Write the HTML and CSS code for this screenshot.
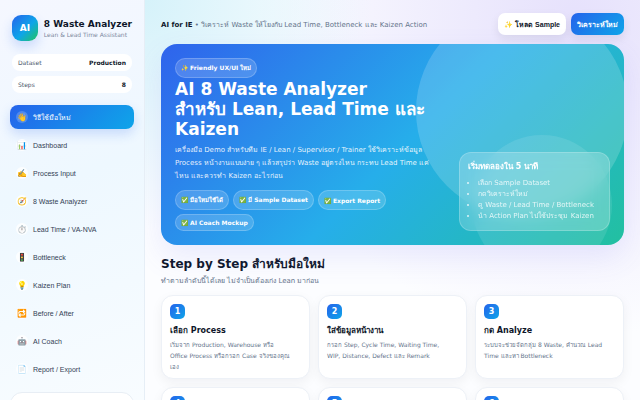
FILE: index.html
```html
<!DOCTYPE html>
<html lang="th">

<head>
    <meta charset="UTF-8">
    <meta name="viewport" content="width=device-width, initial-scale=1.0">
    <title>AI 8 Waste Analyzer</title>
    <link rel="stylesheet" href="styles.css">
</head>

<body>
    <div class="app">
        <aside class="sidebar">
            <div class="brand">
                <div class="brand-logo">AI</div>
                <div>
                    <div class="brand-name">8 Waste Analyzer</div>
                    <div class="brand-sub">Lean &amp; Lead Time Assistant</div>
                </div>
            </div>

            <div class="stats">
                <div class="stat"><span>Dataset</span><strong>Production</strong></div>
                <div class="stat"><span>Steps</span><strong>8</strong></div>
            </div>

            <nav class="nav">
                <button class="nav-item active"><span class="nav-icon">👋</span>วิธีใช้มือใหม่</button>
                <button class="nav-item"><span class="nav-icon">📊</span>Dashboard</button>
                <button class="nav-item"><span class="nav-icon">✍️</span>Process Input</button>
                <button class="nav-item"><span class="nav-icon">🧭</span>8 Waste Analyzer</button>
                <button class="nav-item"><span class="nav-icon">⏱️</span>Lead Time / VA-NVA</button>
                <button class="nav-item"><span class="nav-icon">🚦</span>Bottleneck</button>
                <button class="nav-item"><span class="nav-icon">💡</span>Kaizen Plan</button>
                <button class="nav-item"><span class="nav-icon">🔁</span>Before / After</button>
                <button class="nav-item"><span class="nav-icon">🤖</span>AI Coach</button>
                <button class="nav-item"><span class="nav-icon">📄</span>Report / Export</button>
            </nav>

            <div class="side-card"></div>
        </aside>

        <main class="main">
            <header class="topbar">
                <div class="crumb"><strong>AI for IE</strong> • วิเคราะห์ Waste ให้โยงกับ Lead Time, Bottleneck และ Kaizen Action</div>
                <div class="actions">
                    <button class="btn">✨ โหลด Sample</button>
                    <button class="btn primary">วิเคราะห์ใหม่</button>
                </div>
            </header>

            <section class="hero">
                <div class="hero-text">
                    <span class="chip">✨ Friendly UX/UI ใหม่</span>
                    <h1>AI 8 Waste Analyzer<br>สำหรับ Lean, Lead Time และ Kaizen</h1>
                    <p>เครื่องมือ Demo สำหรับทีม IE / Lean / Supervisor / Trainer ใช้วิเคราะห์ข้อมูล Process หน้างานแบบง่าย ๆ แล้วสรุปว่า Waste อยู่ตรงไหน กระทบ Lead Time แค่ไหน และควรทำ Kaizen อะไรก่อน</p>
                    <div class="chips">
                        <span class="chip">✅ มือใหม่ใช้ได้</span>
                        <span class="chip">✅ มี Sample Dataset</span>
                        <span class="chip">✅ Export Report</span>
                        <span class="chip">✅ AI Coach Mockup</span>
                    </div>
                </div>
                <div class="hero-card">
                    <h2>เริ่มทดลองใน 5 นาที</h2>
                    <ul>
                        <li>เลือก Sample Dataset</li>
                        <li>กดวิเคราะห์ใหม่</li>
                        <li>ดู Waste / Lead Time / Bottleneck</li>
                        <li>นำ Action Plan ไปใช้ประชุม Kaizen</li>
                    </ul>
                </div>
            </section>

            <section class="steps">
                <h2>Step by Step สำหรับมือใหม่</h2>
                <p class="steps-sub">ทำตามลำดับนี้ได้เลย ไม่จำเป็นต้องเก่ง Lean มาก่อน</p>
                <div class="grid">
                    <article class="card">
                        <div class="num">1</div>
                        <h3>เลือก Process</h3>
                        <p>เริ่มจาก Production, Warehouse หรือ Office Process หรือกรอก Case จริงของคุณเอง</p>
                    </article>
                    <article class="card">
                        <div class="num">2</div>
                        <h3>ใส่ข้อมูลหน้างาน</h3>
                        <p>กรอก Step, Cycle Time, Waiting Time, WIP, Distance, Defect และ Remark</p>
                    </article>
                    <article class="card">
                        <div class="num">3</div>
                        <h3>กด Analyze</h3>
                        <p>ระบบจะช่วยจัดกลุ่ม 8 Waste, คำนวณ Lead Time และหา Bottleneck</p>
                    </article>
                    <article class="card">
                        <div class="num">4</div>
                    </article>
                    <article class="card">
                        <div class="num">5</div>
                    </article>
                    <article class="card">
                        <div class="num">6</div>
                    </article>
                </div>
            </section>
        </main>
    </div>
</body>

</html>
```
FILE: styles.css
```css
* {
    box-sizing: border-box;
    margin: 0;
    padding: 0;
}

body {
    font-family: "DejaVu Sans", sans-serif;
    font-size: 7px;
    color: #0f172a;
    background:
        radial-gradient(circle at 22% 0%, #d5f2fa 0, transparent 36%),
        radial-gradient(circle at 90% 5%, #e6e1fc 0, transparent 46%),
        #fcfdff;
    height: 100vh;
    overflow: hidden;
}

.app {
    display: grid;
    grid-template-columns: 145px 1fr;
    height: 100vh;
}

/* sidebar */
.sidebar {
    padding: 14px 10px;
    background: linear-gradient(160deg, #f5f7ff 0%, #eef8ff 45%, #f8fcff 100%);
    border-right: 1px solid #e6eef6;
    overflow: hidden;
}

.brand {
    display: flex;
    align-items: center;
    gap: 6px;
    padding: 1px 2px 0;
}

.brand-logo {
    width: 26px;
    height: 26px;
    border-radius: 9px;
    display: grid;
    place-items: center;
    background: linear-gradient(135deg, #2563eb, #0ea5e9 55%, #22c55e);
    box-shadow: 0 6px 12px rgba(37, 99, 235, 0.2);
    color: #fff;
    font-size: 9px;
    font-weight: 700;
}

.brand-name {
    padding-top: 2px;
    font-size: 9px;
    line-height: 11px;
    font-weight: 700;
    white-space: nowrap;
}

.brand-sub {
    font-size: 6px;
    line-height: 9px;
    color: #7c89a0;
}

.stats {
    display: grid;
    gap: 5px;
    margin: 13px 2px 12px;
}

.stat {
    display: flex;
    justify-content: space-between;
    align-items: center;
    height: 17px;
    padding: 0 6px;
    border-radius: 8px;
    background: #fff;
    font-size: 6px;
    color: #475569;
}

.stat strong {
    color: #0f172a;
}

.nav {
    display: grid;
    gap: 4px;
}

.nav-item {
    display: flex;
    align-items: center;
    gap: 5px;
    height: 24px;
    padding: 0 6px;
    border: 0;
    border-radius: 8px;
    background: transparent;
    color: #334155;
    font-family: "Liberation Sans", sans-serif;
    font-size: 7px;
    text-align: left;
}

.nav-item.active {
    background: linear-gradient(135deg, #2563eb, #0ea5e9);
    box-shadow: 0 5px 12px rgba(37, 99, 235, 0.2);
    color: #fff;
}

.nav-icon {
    width: 12px;
    height: 12px;
    border-radius: 6px;
    display: grid;
    place-items: center;
    background: rgba(255, 255, 255, 0.8);
    font-size: 8px;
}

.active .nav-icon {
    background: rgba(255, 255, 255, 0.2);
}

.side-card {
    height: 60px;
    margin-top: 11px;
    border: 1px solid #e8eef5;
    border-radius: 12px;
    background: #fff;
}

/* main */
.main {
    padding: 13px 16px 0;
    overflow: hidden;
}

.topbar {
    display: flex;
    justify-content: space-between;
    align-items: center;
    margin-bottom: 9px;
}

.crumb {
    color: #64748b;
}

.crumb strong {
    color: #0f172a;
}

.actions {
    display: flex;
    gap: 5px;
}

.btn {
    height: 22px;
    padding: 0 6px;
    border: 0;
    border-radius: 7px;
    background: #fff;
    box-shadow: 0 4px 10px rgba(15, 23, 42, 0.08);
    color: #0f172a;
    font-family: "Liberation Sans", sans-serif;
    font-size: 7px;
    font-weight: 700;
}

.btn.primary {
    background: linear-gradient(135deg, #2563eb, #0ea5e9);
    color: #fff;
}

.hero {
    position: relative;
    display: grid;
    grid-template-columns: 1fr 151px;
    align-items: end;
    gap: 14px;
    padding: 14px;
    border-radius: 16px;
    background: linear-gradient(135deg, #2f63ec 0%, #26aeea 52%, #22c0a0 100%);
    box-shadow: 0 12px 30px rgba(99, 102, 241, 0.12);
    color: #fff;
    overflow: hidden;
}

.hero::before,
.hero::after {
    content: "";
    position: absolute;
    border-radius: 50%;
    background: rgba(255, 255, 255, 0.17);
}

.hero::before {
    width: 212px;
    height: 212px;
    right: -4px;
    top: -39px;
}

.hero::after {
    width: 140px;
    height: 140px;
    right: 12px;
    bottom: -30px;
    background: rgba(255, 255, 255, 0.1);
}

/* both circles stay behind the content, so the card can blur them */
.hero-text,
.hero-card {
    position: relative;
    z-index: 1;
}

.chip {
    display: inline-flex;
    align-items: center;
    padding: 4px 5px;
    border: 1px solid rgba(255, 255, 255, 0.2);
    border-radius: 10px;
    background: rgba(255, 255, 255, 0.16);
    font-size: 6px;
    font-weight: 700;
}

.hero h1 {
    margin: 1px 0 5px;
    font-size: 17px;
    line-height: 20px;
}

.hero p {
    padding-right: 8px;
    font-size: 7px;
    line-height: 13px;
    color: rgba(255, 255, 255, 0.9);
}

.chips {
    display: flex;
    flex-wrap: wrap;
    gap: 4px;
    margin-top: 7px;
}

.hero-card {
    padding: 8px;
    border: 1px solid rgba(255, 255, 255, 0.2);
    border-radius: 12px;
    background: rgba(255, 255, 255, 0.2);
    backdrop-filter: blur(8px);
}

.hero-card h2 {
    font-size: 8px;
    line-height: 12px;
    margin-bottom: 5px;
}

.hero-card ul {
    padding-left: 10px;
    font-size: 7px;
    line-height: 11px;
    color: rgba(255, 255, 255, 0.8);
}

.steps {
    margin-top: 11px;
}

.steps h2 {
    font-size: 12px;
    line-height: 17px;
}

.steps-sub {
    margin-top: 3px;
    line-height: 10px;
    color: #64748b;
}

.grid {
    display: grid;
    grid-template-columns: repeat(3, 1fr);
    gap: 8px;
    margin-top: 9px;
}

.card {
    min-height: 84px;
    padding: 8px 8px 6px;
    border: 1px solid #edf1f7;
    border-radius: 12px;
    background: #fff;
    box-shadow: 0 4px 12px rgba(15, 23, 42, 0.05);
}

.num {
    width: 15px;
    height: 15px;
    border-radius: 5px;
    display: grid;
    place-items: center;
    background: linear-gradient(135deg, #2563eb, #0ea5e9);
    color: #fff;
    font-size: 8px;
    font-weight: 700;
}

.card h3 {
    margin: 6px 0 3px;
    font-size: 8px;
    line-height: 11px;
}

.card p {
    padding-right: 10px;
    font-size: 6px;
    line-height: 11px;
    color: #64748b;
}
```
